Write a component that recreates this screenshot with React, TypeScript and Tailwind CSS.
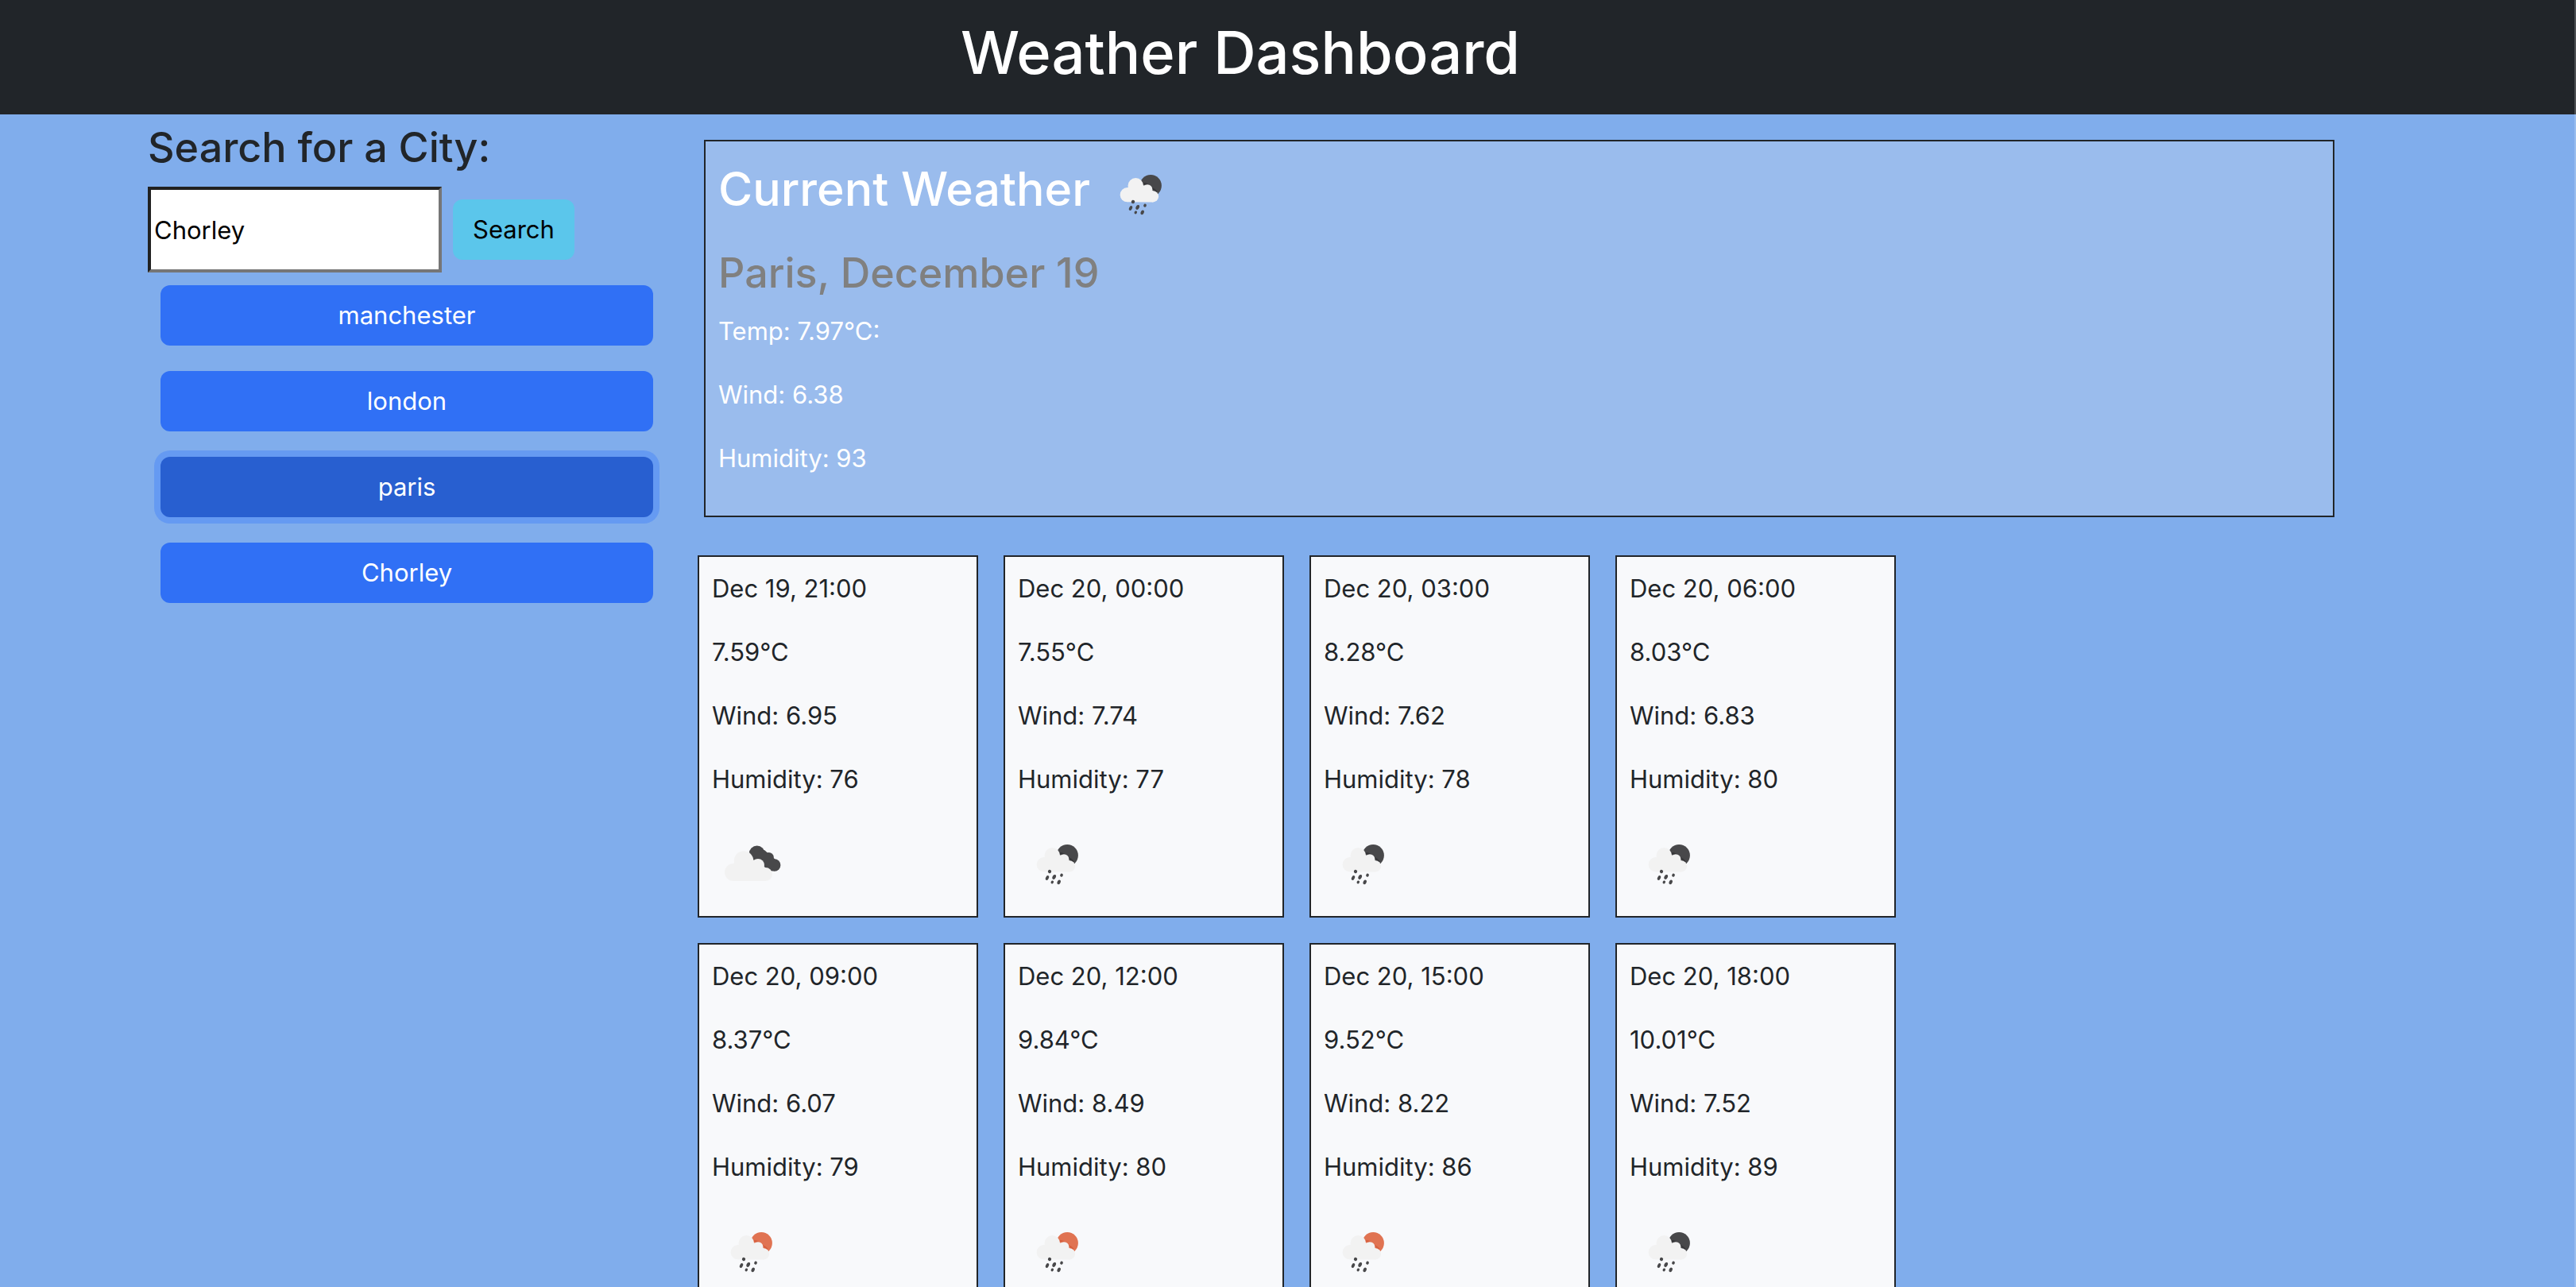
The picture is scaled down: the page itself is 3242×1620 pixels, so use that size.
import { useState } from "react";

type Sky = "rain-night" | "rain-day" | "clouds";

const cities = ["manchester", "london", "paris", "Chorley"];

const forecast: { time: string; temp: string; wind: string; humidity: number; sky: Sky }[] = [
  { time: "Dec 19, 21:00", temp: "7.59", wind: "6.95", humidity: 76, sky: "clouds" },
  { time: "Dec 20, 00:00", temp: "7.55", wind: "7.74", humidity: 77, sky: "rain-night" },
  { time: "Dec 20, 03:00", temp: "8.28", wind: "7.62", humidity: 78, sky: "rain-night" },
  { time: "Dec 20, 06:00", temp: "8.03", wind: "6.83", humidity: 80, sky: "rain-night" },
  { time: "Dec 20, 09:00", temp: "8.37", wind: "6.07", humidity: 79, sky: "rain-day" },
  { time: "Dec 20, 12:00", temp: "9.84", wind: "8.49", humidity: 80, sky: "rain-day" },
  { time: "Dec 20, 15:00", temp: "9.52", wind: "8.22", humidity: 86, sky: "rain-day" },
  { time: "Dec 20, 18:00", temp: "10.01", wind: "7.52", humidity: 89, sky: "rain-night" },
];

const drops = [
  [40, 60, 2.1, 2.3],
  [37, 68, 1.9, 3.1],
  [45.7, 66.9, 2.1, 3.1],
  [55, 64.7, 1.8, 2.1],
  [43.3, 73.4, 1.7, 2],
  [51.7, 73.3, 2, 2.9],
];

function WeatherIcon({ sky }: { sky: Sky }) {
  if (sky === "clouds") {
    return (
      <svg viewBox="0 0 100 100" className="size-25 shrink-0" role="img" aria-label="Broken clouds">
        <g fill="#48484a">
          <circle cx="56.7" cy="37.5" r="10" />
          <circle cx="71.5" cy="42.3" r="6.3" />
          <circle cx="78.7" cy="52" r="7.7" />
          <path d="M47 36 L66 33 L80 45 L76 59.5 L66 56 L54 46 Z" />
        </g>
        <g fill="#f2f2f2">
          <circle cx="27" cy="61" r="11" />
          <circle cx="40" cy="46.5" r="12.2" />
          <circle cx="58" cy="52" r="8" />
          <circle cx="67.5" cy="63.5" r="8.5" />
          <path d="M27 50 L34 44 L58 46 L68 56 L68 72 L27 72 Z" />
        </g>
      </svg>
    );
  }
  return (
    <svg viewBox="0 0 100 100" className="size-25 shrink-0" role="img" aria-label="Rain">
      <circle cx="62.2" cy="39.7" r="13.7" fill={sky === "rain-day" ? "#e07352" : "#48484a"} />
      <path
        d="M50 37 Q59 36 61 43 Q68 43 70 49"
        fill="none"
        stroke={sky === "rain-day" ? "#d75f3e" : "#363638"}
        strokeWidth="2"
      />
      <g fill="#f2f2f2">
        <circle cx="32.8" cy="51.2" r="9.1" />
        <circle cx="43.3" cy="39.9" r="9.8" />
        <circle cx="58" cy="44.6" r="6.4" />
        <circle cx="65" cy="53.3" r="7.1" />
        <path d="M32 43 L40 38 L58 40 L67 48 L72 54 L65 60.4 L32.8 60.3 Z" />
      </g>
      <g fill="#48484a">
        {drops.map(([x, y, rx, ry]) => (
          <ellipse key={`${x}-${y}`} cx={x} cy={y} rx={rx} ry={ry} transform={`rotate(25 ${x} ${y})`} />
        ))}
      </g>
    </svg>
  );
}

export default function App() {
  const [query, setQuery] = useState("Chorley");
  const [active, setActive] = useState("paris");

  return (
    <div className="relative min-h-screen bg-[#80adec] pb-8 font-['Inter',sans-serif] text-[31px] leading-12 text-[#212529]">
      <header className="bg-[#212529] pt-[18px] pr-30 pb-[30px] text-center">
        <h1 className="text-[74px] leading-24 font-medium text-white">Weather Dashboard</h1>
      </header>

      <main className="grid grid-cols-4 pr-[70px] pl-[92px]">
        <aside className="pt-2 pr-6 pl-[94px]">
          <form onSubmit={(e) => e.preventDefault()}>
            <label htmlFor="city" className="mb-4 block text-[52px] leading-[67px] font-medium">
              Search for a City:
            </label>
            <div className="flex items-center gap-3.5">
              <input
                id="city"
                type="text"
                value={query}
                onChange={(e) => setQuery(e.target.value)}
                className="h-27 w-[370px] border-4 border-t-[#212121] border-r-[#767676] border-b-[#767676] border-l-[#212121] bg-white px-1 text-black outline-none"
              />
              <button type="submit" className="rounded-xl bg-[#5bc6eb] px-[25px] py-3.5 text-black">
                Search
              </button>
            </div>
          </form>
          <div className="mx-4 mt-4 flex flex-col gap-8">
            {cities.map((city) => (
              <button
                key={city}
                type="button"
                onClick={() => setActive(city)}
                className={
                  city === active
                    ? "rounded-xl bg-[#285fd0] py-3.5 text-white ring-8 ring-[#659af2] outline-none"
                    : "rounded-xl bg-[#3070f5] py-3.5 text-white outline-none"
                }
              >
                {city}
              </button>
            ))}
          </div>
        </aside>

        <section className="col-span-3 pt-8">
          <article className="mr-[234px] ml-6 border-2 border-[#212529] bg-[#9abced] p-4 text-white">
            <div className="mb-4 flex gap-3.5">
              <h2 className="text-[59px] leading-[88px] font-medium">Current Weather</h2>
              <WeatherIcon sky="rain-night" />
            </div>
            <h3 className="mb-4 text-[52px] leading-[67px] font-medium text-[#808080]">Paris, December 19</h3>
            <p className="mb-8">Temp: 7.97°C:</p>
            <p className="mb-8">Wind: 6.38</p>
            <p className="mb-8">Humidity: 93</p>
          </article>

          <div className="mt-12 grid w-2/3 grid-cols-4 gap-8 px-4">
            {forecast.map((slot) => (
              <article key={slot.time} className="border-2 border-[#212529] bg-[#f8f9fb] p-4">
                <p className="mb-8">{slot.time}</p>
                <p className="mb-8">{slot.temp}°C</p>
                <p className="mb-8">Wind: {slot.wind}</p>
                <p className="mb-8">Humidity: {slot.humidity}</p>
                <WeatherIcon sky={slot.sky} />
              </article>
            ))}
          </div>
        </section>
      </main>
      <div aria-hidden="true" className="absolute inset-y-0 right-0 w-0.5 bg-white/20" />
    </div>
  );
}
